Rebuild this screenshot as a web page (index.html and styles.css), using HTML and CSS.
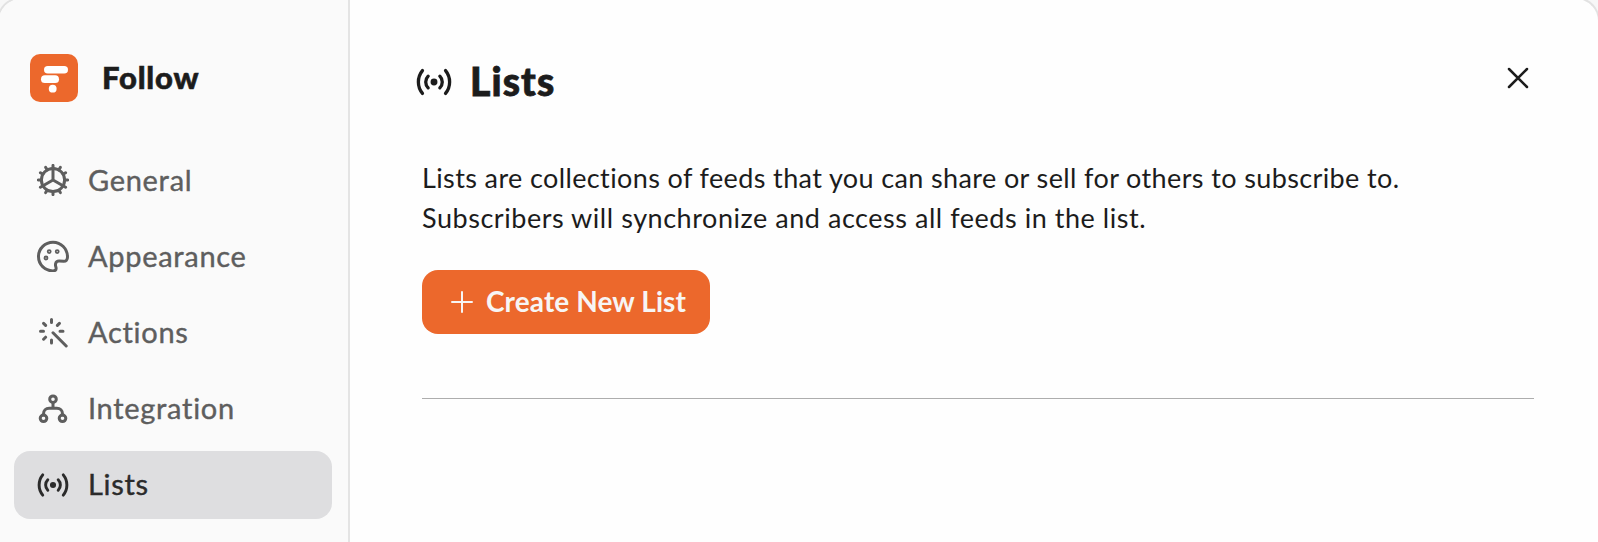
FILE: index.html
```
<!DOCTYPE html>
<html lang="en">
<head>
    <meta charset="UTF-8">
    <meta name="viewport" content="width=device-width, initial-scale=1.0">
    <title>Lists</title>
    <link rel="stylesheet" href="styles.css">
</head>
<body>
    <svg class="sprite" width="0" height="0">
        <symbol id="icon-radar" viewBox="0 0 24 24">
            <circle cx="12" cy="12" r="2.3" fill="currentColor" stroke="none"/>
            <path d="M8.1 8.1a5.5 5.5 0 0 0 0 7.8M15.9 8.1a5.5 5.5 0 0 1 0 7.8M4.3 4.4a12 12 0 0 0 0 15.2M19.7 4.4a12 12 0 0 1 0 15.2"/>
        </symbol>
    </svg>

    <div class="window">
        <aside class="sidebar">
            <div class="brand">
                <svg class="logo" viewBox="0 0 48 48">
                    <rect width="48" height="48" rx="10" fill="#ec682c"/>
                    <rect x="14" y="12" width="24" height="7.5" rx="3.75" fill="#fff"/>
                    <rect x="11" y="21.3" width="18" height="7.7" rx="3.85" fill="#fff"/>
                    <circle cx="22.7" cy="34.7" r="3.9" fill="#fff"/>
                </svg>
                <span class="brand-name">Follow</span>
            </div>
            <nav class="menu">
                <a class="menu-item">
                    <svg class="icon" viewBox="0 0 32 32">
                        <circle cx="16" cy="16" r="11.6"/>
                        <path d="M16 4.5V16M16 16l-10 5.8M16 16l10 5.8"/>
                        <path d="M16 4V1.4M22 5.6l1.3-2.2M26.4 10l2.2-1.3M28 16h2.6M26.4 22l2.2 1.3M22 26.4l1.3 2.2M16 28v2.6M10 26.4l-1.3 2.2M5.6 22l-2.2 1.3M4 16H1.4M5.6 10L3.4 8.7M10 5.6L8.7 3.4"/>
                    </svg>
                    <span>General</span>
                </a>
                <a class="menu-item">
                    <svg class="icon" viewBox="0 0 32 32">
                        <path d="M16 2.2C8.1 2.2 1.500 8.600 1.500 16.500S7.800 30.900 15.800 30.900c2.300 0 3.400-.9 3.300-2.700-.1-1.600-1-2.600-.5-4.600.5-1.900 1.800-2.700 3.700-2.600l4.300.2c2.500.1 3.900-1.500 3.900-4.200C30.500 8.600 24 2.200 16 2.200z"/>
                        <g class="dots">
                            <circle cx="12.2" cy="11.6" r="1.5"/>
                            <circle cx="20.2" cy="11.6" r="1.5"/>
                            <circle cx="9" cy="18" r="1.5"/>
                        </g>
                    </svg>
                    <span>Appearance</span>
                </a>
                <a class="menu-item">
                    <svg class="icon" viewBox="0 0 32 32">
                        <path d="M14.5 3.500v3M14.500 24v3M3.500 15.300h3M23 15.300h3M6.600 7.400l2 2M22.400 7.400l-2 2M6.600 23.200l2-2M16 16.800l13.200 13.200"/>
                    </svg>
                    <span>Actions</span>
                </a>
                <a class="menu-item">
                    <svg class="icon" viewBox="0 0 32 32">
                        <circle cx="16" cy="6.2" r="3.3"/>
                        <circle cx="6.5" cy="25.3" r="3.3"/>
                        <circle cx="25.5" cy="25.3" r="3.3"/>
                        <path d="M16 10v5M6.5 22v-1c0-3.400 2.300-5.700 5.700-5.700h7.600c3.400 0 5.700 2.300 5.700 5.700v1"/>
                    </svg>
                    <span>Integration</span>
                </a>
                <a class="menu-item active">
                    <svg class="icon radar"><use href="#icon-radar"/></svg>
                    <span>Lists</span>
                </a>
            </nav>
        </aside>

        <main class="content">
            <header class="header">
                <svg class="icon radar"><use href="#icon-radar"/></svg>
                <h1>Lists</h1>
                <button class="close" aria-label="Close">
                    <svg viewBox="0 0 22 22"><path d="M2 2l18 18M20 2L2 20"/></svg>
                </button>
            </header>
            <p class="description">
                <span class="line-one">Lists are collections of feeds that you can share or sell for others to subscribe to.</span><br>
                <span class="line-two">Subscribers will synchronize and access all feeds in the list.</span>
            </p>
            <button class="create">
                <svg viewBox="0 0 22 22"><path d="M11 1v20M1 11h20"/></svg>
                <span>Create New List</span>
            </button>
            <hr class="divider">
        </main>
    </div>
</body>
</html>
```
FILE: styles.css
```
* {
    margin: 0;
    padding: 0;
    box-sizing: border-box;
    font-family: Lato, "Open Sans", sans-serif;
}
body {
    height: 100vh;
    overflow: hidden;
    background-color: #f7f7f7;
}
.sprite {
    display: block;
}
.window {
    display: flex;
    height: calc(100vh + 3px);
    margin: -3px -2px 0 -3px;
    border: 2px solid #e2e2e2;
    border-bottom: none;
    border-radius: 24px 24px 0 0;
    background-color: #fefefe;
    overflow: hidden;
}
svg {
    fill: none;
    stroke: currentColor;
    stroke-linecap: round;
    stroke-linejoin: round;
    flex-shrink: 0;
}
.sidebar {
    width: 351px;
    padding: 55px 16px 0 15px;
    border-right: 2px solid #e4e4e4;
    background-color: #fafafa;
}
.brand {
    display: flex;
    align-items: center;
    gap: 24px;
    height: 48px;
    padding-left: 16px;
    color: #1c1c1c;
}
.logo {
    width: 48px;
    height: 48px;
    stroke: none;
}
.brand-name {
    padding-bottom: 2px;
    font-size: 31px;
    font-weight: 900;
    letter-spacing: 0.8px;
    -webkit-text-stroke: 0.6px currentColor;
}
.menu {
    display: flex;
    flex-direction: column;
    gap: 8.2px;
    margin-top: 44px;
}
.menu-item {
    display: flex;
    align-items: center;
    gap: 19px;
    height: 68px;
    padding-left: 23px;
    border-radius: 16px;
    font-size: 29px;
    letter-spacing: 0.7px;
    color: #5e5e5e;
    -webkit-text-stroke: 0.4px currentColor;
}
.menu-item span {
    padding-bottom: 2px;
}
.menu-item.active {
    background-color: #dedee0;
    color: #2b2b2b;
}
.icon {
    width: 32px;
    height: 32px;
    stroke-width: 3px;
}
.dots {
    stroke-width: 1.8px;
}
.radar {
    stroke-width: 2.2px;
}
.content {
    flex: 1;
    padding: 56px 64px 0 72px;
    color: #1c1c1c;
}
.header {
    display: flex;
    align-items: center;
    height: 54px;
    margin-left: -6px;
}
.header .icon {
    width: 36px;
    height: 36px;
}
h1 {
    margin-left: 18px;
    padding-bottom: 2px;
    font-size: 39px;
    font-weight: 900;
    letter-spacing: 1.1px;
    -webkit-text-stroke: 0.8px currentColor;
}
.close {
    width: 22px;
    height: 22px;
    margin: -8px 5px 0 auto;
    border: none;
    background: none;
    color: #1c1c1c;
    stroke-width: 2.5px;
}
.close svg,
.create svg {
    display: block;
    width: 22px;
    height: 22px;
}
.description {
    margin-top: 49px;
    font-size: 27px;
    line-height: 40px;
    white-space: nowrap;
}
.line-one {
    letter-spacing: 0.38px;
}
.line-two {
    letter-spacing: 0.54px;
}
.create {
    display: flex;
    align-items: center;
    gap: 13px;
    width: 288px;
    height: 64px;
    margin-top: 32px;
    padding-left: 29px;
    border: none;
    border-radius: 16px;
    background-color: #ec682c;
    color: #f7f5f4;
    font-size: 28px;
    font-weight: 700;
    letter-spacing: 0.1px;
    white-space: nowrap;
}
.create span {
    padding-bottom: 2px;
}
.create svg {
    stroke-width: 2px;
}
.divider {
    height: 1px;
    margin-top: 64px;
    border: none;
    background-color: #adadad;
}
```
